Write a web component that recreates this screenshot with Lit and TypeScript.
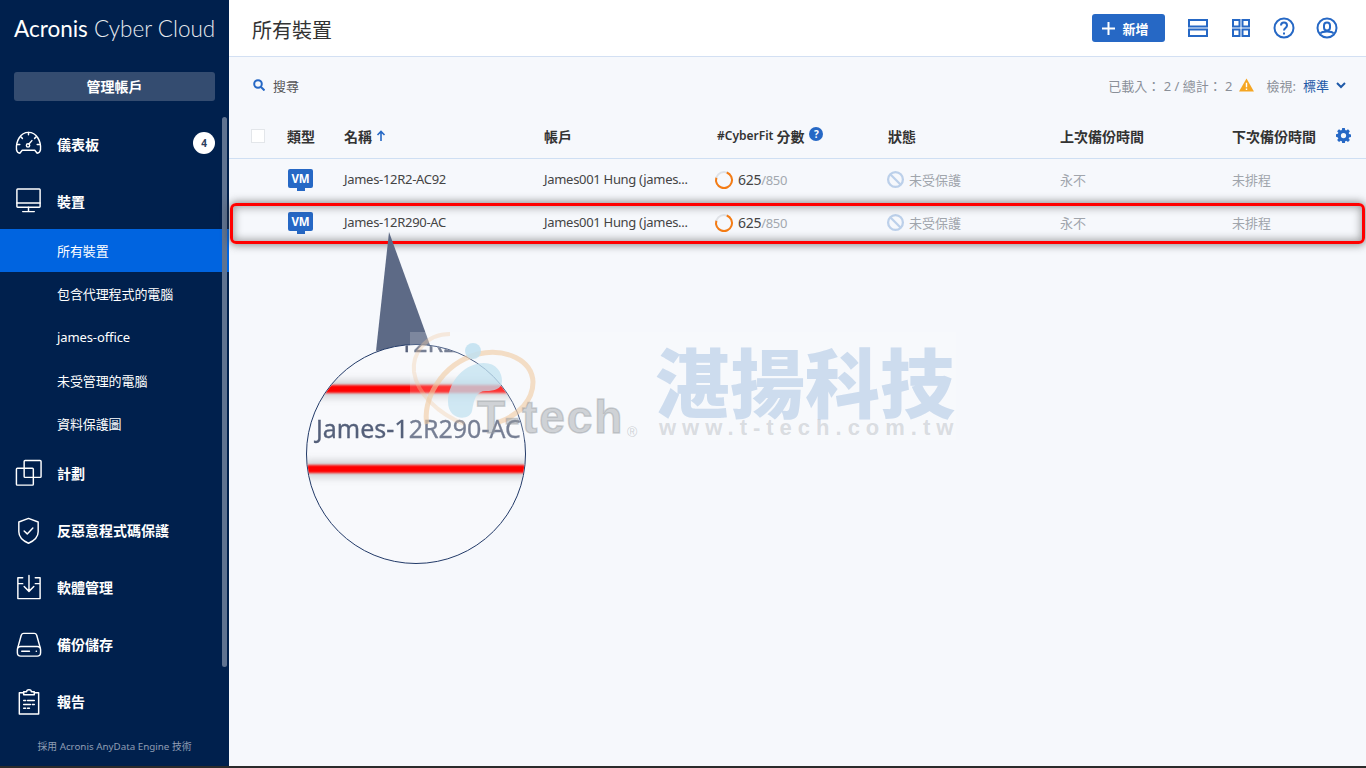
import { LitElement, html, css, svg } from "lit";
import { customElement } from "lit/decorators.js";

const W = (c: any) => html`<svg class="nav-icon" viewBox="0 0 30 30" fill="none" stroke="#fff" stroke-width="1.5" stroke-linecap="round" stroke-linejoin="round">${c}</svg>`;

const icons: Record<string, any> = {
  dash: W(svg`<path d="M6 25c-2-.2-3-1.5-3.400-3.500C1.700 13 6.500 3.500 15 3.500S28.300 13 27.400 21.500C27 23.500 26 24.800 24 25l-2.500-3h-13z"/><path d="M15 3.500v2.500M7 8l1.700 1.700M23 8l-1.700 1.700M3.500 16h2.500M26.500 16H24M18.500 12l-3 3.500"/><circle cx="14.500" cy="17" r="1.700"/>`),
  monitor: W(svg`<rect x="3" y="3" width="24" height="19" rx=".8"/><path d="M3 17.500h24M15 22v4.500M9 26.500h12"/>`),
  plan: W(svg`<rect x="2.500" y="9.500" width="17.500" height="17.500" rx="1"/><rect x="10.500" y="1.500" width="17.500" height="17.500" rx="1"/>`),
  shield: W(svg`<path d="M15 2.500l10 3.700v10c0 5.500-4.500 9.500-10 12-5.500-2.500-10-6.500-10-12v-10z"/><path d="M10.500 15.500l3.200 3 5.800-6"/>`),
  soft: W(svg`<path d="M9 5H4v21.500h23V5h-5M4 11h5M22 11h5M15.500 2.500v16M10.500 14l5 5 5-5"/>`),
  disk: W(svg`<path d="M4 18L7.500 5.500C8 4.200 8.700 3.500 10 3.500h11c1.300 0 2 .7 2.500 2L27 18"/><rect x="3.500" y="17" width="24" height="10" rx="3.500"/><path d="M8 22h8M23 22h.2"/>`),
  report: W(svg`<path d="M10 6H5.500v22h20V6H21"/><path d="M10 8h11V5h-3c0-3-5-3-5 0h-3zM10 14h2M14 14h7M10 18h7M19 18h2M10 22h2M14 22h2"/>`),
};

const B = "#2668c5";
const thIcon = (c: any) => html`<svg class="tool-icon" viewBox="0 0 24 24" fill="none" stroke="${B}" stroke-width="2">${c}</svg>`;

const ring = html`<svg class="ring" viewBox="0 0 20 20" fill="none" stroke-width="2"><circle cx="10" cy="10" r="8" stroke="#dfe2e7"/><circle cx="10" cy="10" r="8" stroke="#f57c14" stroke-dasharray="37 13.300" transform="rotate(-70 10 10)"/></svg>`;
const ban = html`<svg class="ban" viewBox="0 0 20 20" fill="none" stroke="#bcd0ea" stroke-width="2.400"><circle cx="10" cy="10" r="7.800"/><path d="M4.500 4.500l11 11"/></svg>`;
const vm = html`<div class="vm"><span class="vm-box">VM</span><span class="vm-stand"></span></div>`;

const rows = ["James-12R2-AC92", "James-12R290-AC"];
const subs = ["所有裝置", "包含代理程式的電腦", "james-office", "未受管理的電腦", "資料保護圖"];

@customElement("app-root")
export class AppRoot extends LitElement {
  static styles = css`
    :host { display: flex; position: relative; width: 1366px; height: 768px; overflow: hidden; background: #f6f8fc;
      font-family: "Noto Sans", "Noto Sans CJK TC", sans-serif; font-size: 13px; color: #333; }
    .side { width: 229px; flex: none; height: 766px; background: #00204d; color: #fff; display: flex; flex-direction: column; position: relative; }
    .logo { height: 58px; padding: 14px 0 0 14px; box-sizing: border-box; font-family: "Lato", sans-serif; font-size: 22.500px; line-height: 30px; white-space: nowrap; color: #e8ebf0; font-weight: 300; }
    .logo b { font-weight: 400; color: #fff; }
    .acct { margin: 14px 14px 0; height: 29px; box-sizing: border-box; padding-bottom: 2px; background: #344c70; border-radius: 3px; font-weight: 700; font-size: 14px; display: flex; align-items: center; justify-content: center; }
    .nav { margin-top: 14px; display: flex; flex-direction: column; }
    .item { height: 57px; display: flex; align-items: center; padding-left: 14px; font-weight: 700; font-size: 14px; position: relative; }
    .nav-icon { width: 29px; height: 29px; flex: none; margin-right: 14px; }
    .sub { height: 43.200px; display: flex; align-items: center; padding-left: 57px; font-size: 13px; letter-spacing: -.1px; }
    .sub.on { background: #0064e0; }
    .badge { position: absolute; left: 193px; top: 17px; width: 22px; height: 22px; border-radius: 50%; background: #fff; color: #2c3e5c; font-size: 10px; font-weight: 700; display: flex; align-items: center; justify-content: center; }
    .foot { text-align: center; font-size: 9.800px; color: #8f9db3; margin-top: 9px; }
    .thumb { position: absolute; left: 222px; top: 117px; width: 5px; height: 550px; border-radius: 3px; background: #5f7391; }
    .edge { position: absolute; left: 0; right: 0; bottom: 0; height: 2px; background: #2b2b2b; }

    .main { flex: 1; min-width: 0; display: flex; flex-direction: column; }
    .head { height: 57px; box-sizing: border-box; background: #fff; border-bottom: 1px solid #d3e0f3; display: flex; align-items: center; padding: 0 27px 0 23px; }
    .title { font-size: 20px; color: #333; flex: 1; padding-top: 2px; }
    .new { width: 73px; height: 28px; box-sizing: border-box; padding-right: 7px; background: #2668c5; color: #fff; border-radius: 3px; font-weight: 700; font-size: 13px; display: flex; align-items: center; justify-content: center; gap: 6px; margin-right: 21px; }
    .new svg { width: 15px; height: 15px; }
    .tools { display: flex; gap: 19px; }
    .tool-icon { width: 24px; height: 24px; display: block; }
    .bar { height: 58px; box-sizing: border-box; padding: 0 20px 2px 24px; display: flex; align-items: center; color: #8a8f98; }
    .search { display: flex; align-items: center; gap: 8px; color: #555; flex: 1; }
    .search svg { width: 12px; height: 12px; }
    .stat { display: flex; align-items: center; font-size: 13px; }
    .warn { width: 15px; height: 14px; margin: 0 13px 0 6px; }
    .view { color: #1f5aa8; margin-left: 7px; }
    .chev { width: 10px; height: 7px; margin-left: 7px; }
    .grid { display: grid; grid-template-columns: 58px 57px 200px 173px 171px 172px 172px 1fr; align-items: center; }
    .th { height: 44px; box-sizing: border-box; padding-bottom: 2px; border-bottom: 1px solid #cfdff3; font-weight: 700; font-size: 14px; color: #333; position: relative; }
    .tr { height: 43px; box-sizing: border-box; padding-bottom: 2px; color: #444; }
    .check { width: 14px; height: 14px; box-sizing: border-box; margin-left: 22px; background: #fff; border: 1px solid #e3e6ea; }
    .up { width: 10px; height: 11px; margin-left: 4px; }
    .name { display: flex; align-items: center; }
    .cf { font-size: 12px; margin-right: 3px; font-weight: 600; }
    .q { width: 14px; height: 14px; margin-left: 5px; border-radius: 50%; background: #2668c5; color: #fff; font-size: 10px; font-weight: 700; display: inline-flex; align-items: center; justify-content: center; margin-top: -3px; }
    .gear { position: absolute; right: 15px; top: 13px; width: 15px; height: 15px; }
    .vm { display: flex; flex-direction: column; align-items: center; width: 25px; margin-left: 1px; }
    .vm-box { width: 25px; height: 19px; background: #2668c5; border-radius: 2px; color: #fff; font-weight: 700; font-size: 11.500px; display: flex; align-items: center; justify-content: center; letter-spacing: -.2px; }
    .vm-stand { width: 8px; height: 3px; background: #2668c5; }
    .lat { letter-spacing: -.3px; margin-top: -1px; }
    .score { display: flex; align-items: center; margin-left: -3px; font-size: 14px; letter-spacing: -.3px; }
    .ring { width: 20px; height: 20px; margin-right: 4px; }
    .score em { font-style: normal; color: #a3a8af; font-size: 13px; }
    .st { display: flex; align-items: center; color: #a0a5ac; margin-left: -2px; }
    .ban { width: 19px; height: 19px; margin-right: 4px; }
    .mute { color: #a0a5ac; }

    .mark { position: absolute; left: 410px; top: 332px; width: 546px; height: 108px; background: rgba(255,255,255,.2); }
    .mark svg { position: absolute; left: 0; top: 0; width: 130px; height: 105px; }
    .t-word { position: absolute; left: 67px; top: 62px; font: 700 46px/46px "Liberation Sans", sans-serif; color: rgba(150,155,160,.42); -webkit-text-stroke: 1.500px rgba(150,155,160,.42); paint-order: stroke fill; letter-spacing: 2px; white-space: nowrap; }
    .reg { position: absolute; left: 217px; top: 92px; font: 400 14px/16px "Liberation Sans", sans-serif; color: rgba(150,155,160,.42); }
    .cn { position: absolute; left: 245px; top: 6px; font: 900 75px/84px "Noto Sans CJK TC", sans-serif; color: #cddcee; white-space: nowrap; }
    .url { position: absolute; left: 249px; top: 83px; font: 700 22px/26px "Liberation Sans", sans-serif; color: rgba(170,175,182,.4); letter-spacing: 6px; white-space: nowrap; }

    .callout { position: absolute; left: 370px; top: 230px; width: 64px; height: 124px; }
    .lens { position: absolute; left: 306px; top: 344px; width: 220px; height: 220px; border-radius: 50%; border: 1px solid #223a68; background: #f8f9fc; overflow: hidden; box-sizing: border-box; }
    .rb { position: absolute; left: 0; right: 0; height: 8px; background: #f00; box-shadow: 0 0 8px 3px rgba(90,90,90,.35); filter: blur(1px); }
    .rb.a { top: 40px; }
    .rb.b { top: 120px; }
    .lt { position: absolute; white-space: nowrap; font-size: 25px; line-height: 30px; color: #55607a; filter: blur(.6px); -webkit-text-stroke: .3px #55607a; }
    .lt.a { left: 92px; top: -18px; }
    .lt.b { left: 9px; top: 68px; }
    .hl { position: absolute; left: 230px; top: 203px; width: 1135px; height: 41px; box-sizing: border-box; border: 3px solid #f00; border-radius: 6px; box-shadow: 0 0 8px 1px rgba(60,60,60,.6), inset 0 0 8px 1px rgba(60,60,60,.5); }
  `;

  render() {
    return html`
      <aside class="side">
        <div class="logo"><b>Acronis</b> Cyber Cloud</div>
        <div class="acct">管理帳戶</div>
        <nav class="nav">
          <div class="item">${icons.dash}儀表板<span class="badge">4</span></div>
          <div class="item">${icons.monitor}裝置</div>
          ${subs.map((s, i) => html`<div class="sub ${i === 0 ? "on" : ""}">${s}</div>`)}
          <div class="item">${icons.plan}計劃</div>
          <div class="item">${icons.shield}反惡意程式碼保護</div>
          <div class="item">${icons.soft}軟體管理</div>
          <div class="item">${icons.disk}備份儲存</div>
          <div class="item">${icons.report}報告</div>
        </nav>
        <div class="foot">採用 Acronis AnyData Engine 技術</div>
        <div class="thumb"></div>
      </aside>
      <main class="main">
        <header class="head">
          <div class="title">所有裝置</div>
          <div class="new"><svg viewBox="0 0 15 15" fill="none" stroke="#fff" stroke-width="2"><path d="M7.500 1v13M1 7.500h13"/></svg>新增</div>
          <div class="tools">
            ${thIcon(svg`<rect x="3" y="4" width="18" height="6.500"/><rect x="3" y="13.500" width="18" height="6.500"/>`)}
            ${thIcon(svg`<rect x="4" y="4" width="6.500" height="6.500"/><rect x="13.500" y="4" width="6.500" height="6.500"/><rect x="4" y="13.500" width="6.500" height="6.500"/><rect x="13.500" y="13.500" width="6.500" height="6.500"/>`)}
            ${thIcon(svg`<circle cx="12" cy="12" r="9.500"/><path d="M9 9.500c0-4 6-4 6 0 0 2.500-3 2.500-3 5"/><path d="M12 16.500v2"/>`)}
            ${thIcon(svg`<circle cx="12" cy="12" r="9.500"/><rect x="9" y="6.500" width="6" height="8" rx="3"/><path d="M5.500 17.500c1-1.500 3-2 6.500-2s5.500.5 6.500 2"/>`)}
          </div>
        </header>
        <div class="bar">
          <div class="search"><svg viewBox="0 0 12 12" fill="none" stroke="${B}" stroke-width="2"><circle cx="5" cy="5" r="3.800"/><path d="M8 8l3.500 3.500"/></svg>搜尋</div>
          <div class="stat">已載入： 2 / 總計： 2
            <svg class="warn" viewBox="0 0 16 15"><path d="M8 .5L16 14.500H0z" fill="#f5a623"/><path d="M8 5v5M8 11.200v1.600" stroke="#fff" stroke-width="1.500"/></svg>
            檢視: <span class="view">標準</span>
            <svg class="chev" viewBox="0 0 10 7" fill="none" stroke="#1f5aa8" stroke-width="2"><path d="M1 1l4 4 4-4"/></svg>
          </div>
        </div>
        <div class="grid th">
          <div><div class="check"></div></div>
          <div>類型</div>
          <div class="name">名稱<svg class="up" viewBox="0 0 10 11" fill="none" stroke="${B}" stroke-width="1.600"><path d="M5 11V1.500M1.500 5L5 1.500 8.500 5"/></svg></div>
          <div>帳戶</div>
          <div class="name"><span class="cf">#CyberFit</span>分數<span class="q">?</span></div>
          <div>狀態</div>
          <div>上次備份時間</div>
          <div>下次備份時間</div>
          <svg class="gear" viewBox="0 0 16 16"><path fill="${B}" fill-rule="evenodd" d="M6.600 0h2.800l.4 2.200 1.100.5L12.800 1.400l2 2-1.300 1.900.5 1.100 2 .4v2.800l-2.100.4-.4 1.100 1.300 1.800-2 2-1.900-1.300-1.100.5-.4 2.200H6.600l-.4-2.200-1.100-.5-1.900 1.300-2-2 1.300-1.800-.5-1.100L0 9.400V6.600l2-.4.500-1.100L1.200 3.400l2-2 1.900 1.300 1.100-.5zM8 5.200a2.800 2.800 0 1 0 0 5.600 2.800 2.800 0 0 0 0-5.600z"/></svg>
        </div>
        ${rows.map((r) => html`
          <div class="grid tr">
            <div></div>
            <div>${vm}</div>
            <div class="lat">${r}</div>
            <div class="lat">James001 Hung (james...</div>
            <div class="score">${ring}625<em>/850</em></div>
            <div class="st">${ban}未受保護</div>
            <div class="mute">永不</div>
            <div class="mute">未排程</div>
          </div>`)}
      </main>

      <div class="hl"></div>
      <svg class="callout" viewBox="0 0 64 124"><path d="M19 2L6 121 60 115z" fill="#5d6a86"/></svg>
      <div class="lens">
        <div class="lt a">12R2</div>
        <div class="rb a"></div>
        <div class="lt b">James-12R290-AC</div>
        <div class="rb b"></div>
      </div>
      <div class="mark">
        <svg viewBox="0 0 130 105" fill="none">
          <path d="M40 2C15 2 2 22 4 40c3 22 25 42 50 52" stroke="#f0c9a0" stroke-opacity=".35" stroke-width="4"/>
          <path d="M17 92C12 70 30 32 68 22c28-6 54 6 55 28 0 18-14 33-34 40" stroke="#f0c9a0" stroke-opacity=".6" stroke-width="5"/>
          <circle cx="63" cy="19" r="8" fill="#bfe0f0" fill-opacity=".85"/>
          <path d="M38 70c0-22 18-39 36-39 12 0 18 9 18 18 0 8-8 10-16 10-10 0-12 8-14 20-2 10-24 10-24-9z" fill="#bfe0f0" fill-opacity=".72"/>
        </svg>
        <div class="t-word">T-tech</div>
        <div class="reg">®</div>
        <div class="cn">湛揚科技</div>
        <div class="url">www.t-tech.com.tw</div>
      </div>
      <div class="edge"></div>
    `;
  }
}
